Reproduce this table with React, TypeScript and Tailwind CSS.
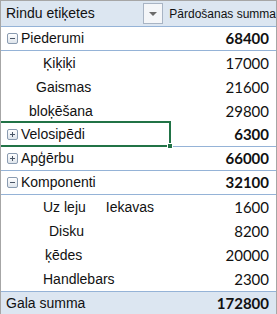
import React from "react";

type Row = {
  label: string;
  value: string;
  kind: "group" | "child";
  open?: boolean;
  pad?: number;
  extra?: string;
  line?: boolean;
  selected?: boolean;
};

const rows: Row[] = [
  { label: "Piederumi", value: "68400", kind: "group", open: true, line: true },
  { label: "Ķiķiķi", value: "17000", kind: "child", pad: 42 },
  { label: "Gaismas", value: "21600", kind: "child", pad: 35 },
  { label: "bloķēšana", value: "29800", kind: "child", pad: 28 },
  { label: "Velosipēdi", value: "6300", kind: "group", open: false, line: true, selected: true },
  { label: "Apģērbu", value: "66000", kind: "group", open: false, line: true },
  { label: "Komponenti", value: "32100", kind: "group", open: true, line: true },
  { label: "Uz leju", value: "1600", kind: "child", pad: 42, extra: "Iekavas" },
  { label: "Disku", value: "8200", kind: "child", pad: 48 },
  { label: "ķēdes", value: "20000", kind: "child", pad: 44 },
  { label: "Handlebars", value: "2300", kind: "child", pad: 42 },
];

const Toggle: React.FC<{ open: boolean }> = ({ open }) => (
  <span className="relative inline-block w-[11px] h-[11px] border border-[#8a9bb0] rounded-[2px] bg-gradient-to-b from-[#ffffff] to-[#dfe5ec] mr-[3px]">
    <span className="absolute left-[2px] top-[4px] w-[5px] h-px bg-[#4a5566]" />
    {!open && <span className="absolute left-[4px] top-[2px] w-px h-[5px] bg-[#4a5566]" />}
  </span>
);

export default function App() {
  return (
    <div className="w-[277px] h-[314px] bg-white overflow-hidden border-l border-r border-t border-[#a6a6a6] text-[#111111] font-['Liberation_Sans',Arial,sans-serif]">
      <div className="flex items-center h-[26px] bg-[#dce6f1] border-b border-[#95b3d7]">
        <div className="w-[148px] pl-[5px] text-[14px]">Rindu etiķetes</div>
        <div className="w-[21px] h-[21px] border border-[#a8b4c4] bg-[#f4f6f9] flex items-center justify-center">
          <span className="w-0 h-0 border-l-[4px] border-r-[4px] border-t-[4px] border-l-transparent border-r-transparent border-t-[#6b6b6b]" />
        </div>
        <div className="pl-[6px] text-[12px] whitespace-nowrap">Pārdošanas summa</div>
      </div>
      {rows.map((r) => (
        <div
          key={r.label}
          className={`relative flex items-center h-[24px] ${r.line ? "border-b border-[#95b3d7]" : ""}`}
        >
          <div
            className="w-[169px] flex items-center text-[14px] whitespace-nowrap"
            style={{ paddingLeft: r.kind === "group" ? 6 : r.pad }}
          >
            {r.kind === "group" && <Toggle open={!!r.open} />}
            <span>{r.label}</span>
            {r.extra && <span className="ml-[20px]">{r.extra}</span>}
          </div>
          <div
            className={`flex-1 text-right pr-[7px] text-[15px] font-['Lato',sans-serif] ${r.kind === "group" ? "font-bold" : ""}`}
          >
            {r.value}
          </div>
          {r.selected && (
            <>
              <div className="absolute left-0 top-[-2px] w-[170px] h-[26px] border-2 border-l-0 border-[#217346]" />
              <div className="absolute left-[166px] top-[20px] w-[6px] h-[6px] bg-[#217346] border border-white" />
            </>
          )}
        </div>
      ))}
      <div className="flex items-center h-[24px] bg-[#dce6f1] border-t border-[#95b3d7]">
        <div className="w-[169px] pl-[5px] text-[14px]">Gala summa</div>
        <div className="flex-1 text-right pr-[7px] text-[15px] font-bold font-['Lato',sans-serif]">172800</div>
      </div>
    </div>
  );
}
